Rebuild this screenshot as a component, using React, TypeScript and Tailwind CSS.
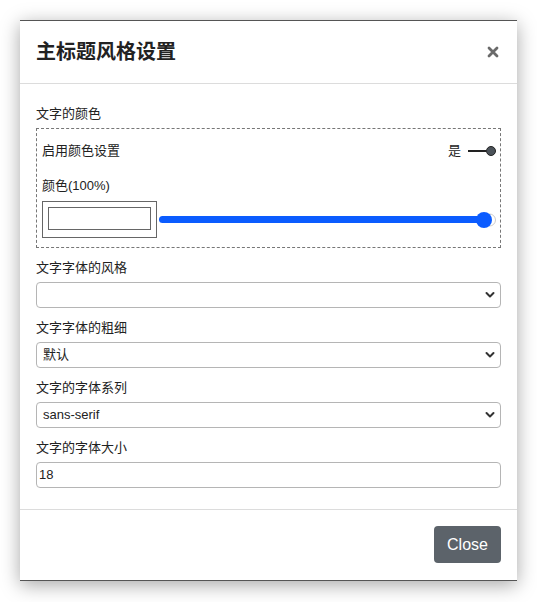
const font = { fontFamily: '"Liberation Sans", "Noto Sans CJK SC", sans-serif' };

const Chevron = () => (
  <svg className="pointer-events-none absolute right-[5px] top-1/2 -translate-y-1/2" width="10" height="7" viewBox="0 0 10 7">
    <path d="M1.5 1.5 L5 5 L8.5 1.5" fill="none" stroke="#333" strokeWidth="2" strokeLinecap="round" strokeLinejoin="round" />
  </svg>
);

const Field = ({ label, children }: { label: string; children: React.ReactNode }) => (
  <div className="mt-[10px]">
    <div className="h-5 text-[13px] leading-5 text-[#222]">{label}</div>
    <div className="mt-[4px]">{children}</div>
  </div>
);

const Select = ({ value }: { value: string }) => (
  <div className="relative h-[26px] rounded-[4px] border border-[#b5b5b5] bg-white">
    <div className="pl-[6px] text-[13px] leading-[24px] text-[#222]">{value}</div>
    <Chevron />
  </div>
);

export default function App() {
  return (
    <div className="min-h-[602px] bg-white pt-5 text-[#222]" style={font}>
      <div className="mx-[20px] w-[497px] border-t border-b border-[#555] bg-white shadow-[0_4px_18px_rgba(0,0,0,0.35)]">
        <div className="flex h-[63px] items-center justify-between border-b border-[#dcdcdc] px-4">
          <div className="text-[20px] font-bold text-[#222]">主标题风格设置</div>
          <svg width="12" height="12" viewBox="0 0 12 12" className="mr-[2px]">
            <path d="M2 2 L10 10 M10 2 L2 10" stroke="#6a6a6a" strokeWidth="2.8" strokeLinecap="round" />
          </svg>
        </div>

        <div className="px-4 pt-[20px] pb-[21px]">
          <div className="h-5 text-[13px] leading-5">文字的颜色</div>
          <div className="mt-[4px] h-[120px] border border-dashed border-[#777] pl-[5px] pr-[4px] pt-[12px]">
            <div className="flex h-5 items-center justify-between text-[13px]">
              <span>启用颜色设置</span>
              <div className="flex items-center">
                <span>是</span>
                <div className="ml-[7px] h-[2px] w-[18px] bg-[#222]" />
                <div className="h-[10px] w-[10px] rounded-full border border-[#222] bg-[#4b5259]" />
              </div>
            </div>
            <div className="mt-[15px] h-5 text-[13px] leading-5">颜色(100%)</div>
            <div className="mt-[5px] flex items-center">
              <div className="h-[37px] w-[115px] border border-[#666] p-[5px]">
                <div className="h-[23px] border border-[#666] bg-white" />
              </div>
              <div className="relative ml-[2px] mr-[1px] h-[7px] flex-1">
                <div className="h-full w-full rounded-full bg-[#0b5cff]" />
                <div className="absolute right-[-1px] top-1/2 h-[13px] w-[13px] -translate-y-1/2 rounded-full border border-[#ccc] bg-white" />
                <div className="absolute right-[3px] top-1/2 h-[16px] w-[16px] -translate-y-1/2 rounded-full bg-[#0b5cff]" />
              </div>
            </div>
          </div>

          <Field label="文字字体的风格">
            <Select value="" />
          </Field>
          <Field label="文字字体的粗细">
            <Select value="默认" />
          </Field>
          <Field label="文字的字体系列">
            <Select value="sans-serif" />
          </Field>
          <Field label="文字的字体大小">
            <div className="h-[26px] rounded-[4px] border border-[#b5b5b5] bg-white pl-[2px] text-[13px] leading-[24px]">18</div>
          </Field>
        </div>

        <div className="flex justify-end border-t border-[#dcdcdc] px-4 pt-4 pb-[17px]">
          <button className="h-[37px] w-[67px] rounded-[4px] bg-[#5c636a] text-[16px] text-white">Close</button>
        </div>
      </div>
    </div>
  );
}
